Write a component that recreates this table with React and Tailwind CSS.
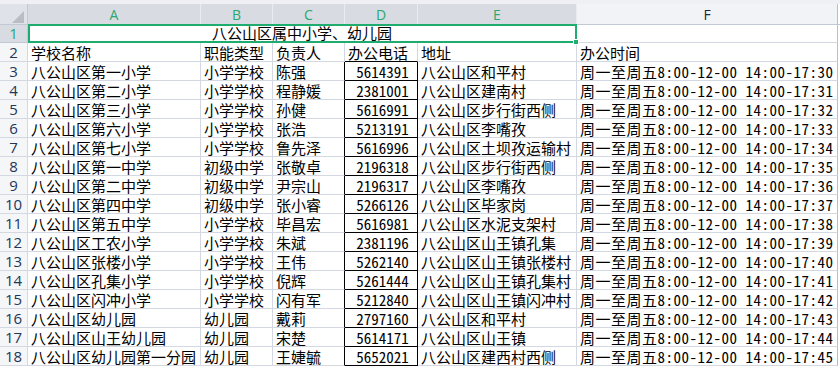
import React from 'react';

const rows = [
  ['八公山区第一小学', '小学学校', '陈强', '5614391', '八公山区和平村', '17:30'],
  ['八公山区第二小学', '小学学校', '程静媛', '2381001', '八公山区建南村', '17:31'],
  ['八公山区第三小学', '小学学校', '孙健', '5616991', '八公山区步行街西侧', '17:32'],
  ['八公山区第六小学', '小学学校', '张浩', '5213191', '八公山区李嘴孜', '17:33'],
  ['八公山区第七小学', '小学学校', '鲁先泽', '5616996', '八公山区土坝孜运输村', '17:34'],
  ['八公山区第一中学', '初级中学', '张敬卓', '2196318', '八公山区步行街西侧', '17:35'],
  ['八公山区第二中学', '初级中学', '尹宗山', '2196317', '八公山区李嘴孜', '17:36'],
  ['八公山区第四中学', '初级中学', '张小睿', '5266126', '八公山区毕家岗', '17:37'],
  ['八公山区第五中学', '小学学校', '毕昌宏', '5616981', '八公山区水泥支架村', '17:38'],
  ['八公山区工农小学', '小学学校', '朱斌', '2381196', '八公山区山王镇孔集', '17:39'],
  ['八公山区张楼小学', '小学学校', '王伟', '5262140', '八公山区山王镇张楼村', '17:40'],
  ['八公山区孔集小学', '小学学校', '倪辉', '5261444', '八公山区山王镇孔集村', '17:41'],
  ['八公山区闪冲小学', '小学学校', '闪有军', '5212840', '八公山区山王镇闪冲村', '17:42'],
  ['八公山区幼儿园', '幼儿园', '戴莉', '2797160', '八公山区和平村', '17:43'],
  ['八公山区山王幼儿园', '幼儿园', '宋楚', '5614171', '八公山区山王镇', '17:44'],
  ['八公山区幼儿园第一分园', '幼儿园', '王婕毓', '5652021', '八公山区建西村西侧', '17:45'],
];

const cjk = "font-['Noto_Sans_CJK_SC',sans-serif]";
const grid = 'border-r border-b border-[#d3d8e2]';
const cell = `${grid} h-[19px] pl-[3px] text-[15px] leading-[19px] text-black whitespace-nowrap overflow-visible`;
const rowHead = "h-[19px] border-r border-b border-[#d3d8e2] bg-[#f5f6f8] flex items-center justify-center text-[15px] text-[#22365a] font-['Open_Sans',sans-serif]";
const half = "[font-feature-settings:'hwid']";

export default function App() {
  return (
    <div className={`w-[840px] h-[368px] overflow-hidden bg-white ${cjk}`}>
      <div className="h-[4px] bg-[#eef0f3]" />
      <div className="grid grid-cols-[28px_173px_72px_72px_73px_159px_261px_1fr]">
        {/* column headers */}
        <div className="relative h-[21px] bg-[#dfe2e8] border-r border-b border-[#c3c9d4]">
          <svg className="absolute left-0 top-0" width="28" height="21">
            <polygon points="24,7 24,19 12,19" fill="#b9bdc6" />
          </svg>
        </div>
        {['A', 'B', 'C', 'D', 'E'].map((c) => (
          <div
            key={c}
            className="h-[21px] bg-[#d8dbe2] border-r border-b border-r-[#e9ebef] border-b-[#c3c9d4] flex items-center justify-center text-[14px] text-[#2aa870] font-['Open_Sans',sans-serif]"
          >
            {c}
          </div>
        ))}
        <div className="h-[21px] bg-[#f2f3f6] border-r border-b border-r-[#b8bfcc] border-b-[#c3c9d4] flex items-center justify-center text-[14px] text-[#1d2738] font-['Open_Sans',sans-serif]">
          F
        </div>
        <div className="h-[21px] bg-white border-b border-[#c3c9d4]" />

        {/* row 1: merged title, selected */}
        <div className="h-[18px] border-r border-b border-[#c3c9d4] bg-[#d8dbe2] flex items-center justify-center text-[15px] text-[#2aa870] font-['Open_Sans',sans-serif]">
          1
        </div>
        <div className="col-span-5 relative h-[18px] border-r border-b border-[#d3d8e2] text-center text-[15px] leading-[15px] text-black">
          八公山区属中小学、幼儿园
          <div className="absolute -top-[1px] left-0 -right-px -bottom-px border-2 border-[#1fad6f]" />
          <div className="absolute -right-[3px] -bottom-[3px] w-[6px] h-[6px] bg-[#1fad6f] border border-white" />
        </div>
        <div className={`${grid} h-[18px] border-r-[#b8bfcc]`} />
        <div className="h-[18px]" />

        {/* row 2 */}
        <div className={rowHead}>2</div>
        <div className={cell}>学校名称</div>
        <div className={cell}>职能类型</div>
        <div className={cell}>负责人</div>
        <div className={`${cell} border-b-black`}>办公电话</div>
        <div className={cell}>地址</div>
        <div className={`${cell} border-r-[#b8bfcc]`}>办公时间</div>
        <div className="h-[19px]" />

        {rows.map((r, i) => (
          <React.Fragment key={i}>
            <div className={rowHead}>{i + 3}</div>
            <div className={cell}>{r[0]}</div>
            <div className={cell}>{r[1]}</div>
            <div className={`${cell} border-r-black`}>{r[2]}</div>
            <div className={`${cell} border-r-black border-b-black pl-0 text-center text-[13.5px] ${half}`}>
              {r[3]}
            </div>
            <div className={`${cell} pl-[2px]`}>{r[4]}</div>
            <div className={`${cell} border-r-[#b8bfcc] pl-[2px] tracking-[0.5px] ${half}`}>
              {`周一至周五8:00-12-00 14:00-${r[5]}`}
            </div>
            <div className="h-[19px]" />
          </React.Fragment>
        ))}
      </div>
    </div>
  );
}
